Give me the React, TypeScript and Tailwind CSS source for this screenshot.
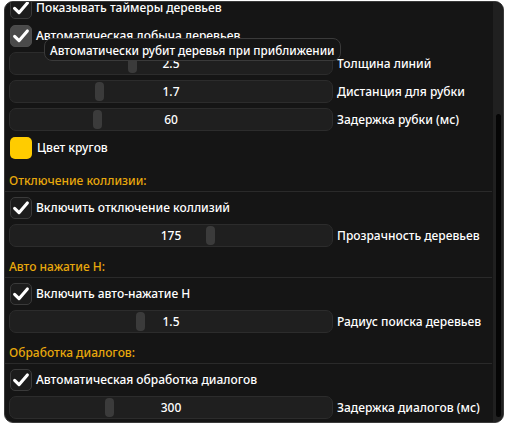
import React from 'react';

type SliderRowProps = {
  value: string;
  grab: number;
  label: string;
};

function Check() {
  return (
    <svg viewBox="0 0 22 22" className="h-[22px] w-[22px]">
      <path
        d="M4 11.5 L8.8 16.2 L18 5.5"
        fill="none"
        stroke="#ffffff"
        strokeWidth={3.4}
        strokeLinecap="round"
        strokeLinejoin="round"
      />
    </svg>
  );
}

function CheckRow({ label, hovered = false }: { label: string; hovered?: boolean }) {
  return (
    <div className="flex h-[23px] items-center gap-[4px] pl-[5px]">
      <div
        className={`flex h-[22px] w-[22px] items-center justify-center rounded-[5px] border ${
          hovered
            ? 'border-[#4d4d4d] bg-[#4a4a4a]'
            : 'border-[#3a3a3a] bg-[#1c1c1c]'
        }`}
      >
        <Check />
      </div>
      <span className="whitespace-nowrap">{label}</span>
    </div>
  );
}

function SliderRow({ value, grab, label }: SliderRowProps) {
  return (
    <div className="flex h-[23px] items-center gap-[4px] pl-[4px]">
      <div className="relative flex h-[23px] w-[324px] shrink-0 items-center justify-center rounded-[7px] border border-[#2c2c2c] bg-[#1f1f1f]">
        <div
          className="absolute top-[1px] h-[19px] w-[9px] rounded-[4px] bg-[#3b3b3b]"
          style={{ left: grab }}
        />
        <span className="relative">{value}</span>
      </div>
      <span className="whitespace-nowrap">{label}</span>
    </div>
  );
}

function Section({ title, children }: { title: string; children: React.ReactNode }) {
  return (
    <div className="flex flex-col">
      <div className="h-4 pl-[4px] text-[#e8a80c]">{title}</div>
      <div className="mt-[2px] h-px w-[487px] bg-[#2a2a2a]" />
      <div className="mt-[4px] flex flex-col gap-[5px]">{children}</div>
    </div>
  );
}

export default function App() {
  return (
    <div
      className="h-[429px] w-[508px] bg-white pt-[1px]"
      style={{ fontFamily: '"Noto Sans", "Open Sans", sans-serif' }}
    >
      <div className="ml-[4px] flex h-[422px] w-[500px] overflow-hidden rounded-[9px] border border-[#3a3a3a] bg-[#151515]">
        <div className="relative w-[488px] text-[12px] font-medium leading-4 text-white">
          <div className="mt-[-6px] flex flex-col gap-[12px]">
            <div className="flex flex-col gap-[5px]">
              <CheckRow label="Показывать таймеры деревьев" />
              <CheckRow label="Автоматическая добыча деревьев" hovered />
              <SliderRow value="2.5" grab={118} label="Толщина линий" />
              <SliderRow value="1.7" grab={85} label="Дистанция для рубки" />
              <SliderRow value="60" grab={83} label="Задержка рубки (мс)" />
              <div className="flex h-[23px] items-center gap-[5px] pl-[5px]">
                <div className="h-[22px] w-[22px] rounded-[5px] bg-[#ffcc00]" />
                <span>Цвет кругов</span>
              </div>
            </div>

            <div className="mt-[2px]">
              <Section title="Отключение коллизии:">
                <CheckRow label="Включить отключение коллизий" />
                <SliderRow value="175" grab={196} label="Прозрачность деревьев" />
              </Section>
            </div>

            <Section title="Авто нажатие H:">
              <CheckRow label="Включить авто-нажатие H" />
              <SliderRow value="1.5" grab={126} label="Радиус поиска деревьев" />
            </Section>

            <Section title="Обработка диалогов:">
              <CheckRow label="Автоматическая обработка диалогов" />
              <SliderRow value="300" grab={95} label="Задержка диалогов (мс)" />
            </Section>
          </div>

          {/* tooltip over the hovered checkbox */}
          <div className="absolute left-[39px] top-[36px] flex h-[23px] items-center rounded-[8px] border border-[#3a3a3a] bg-[#151515] px-[5px]">
            <span className="whitespace-nowrap text-[11.7px]">
              Автоматически рубит деревья при приближении
            </span>
          </div>
        </div>
        <div className="flex w-[10px] flex-col bg-[#202020] pt-[112px]">
          <div className="ml-[3px] h-[303px] w-[5px] rounded-full bg-[#050505]" />
        </div>
      </div>
    </div>
  );
}
